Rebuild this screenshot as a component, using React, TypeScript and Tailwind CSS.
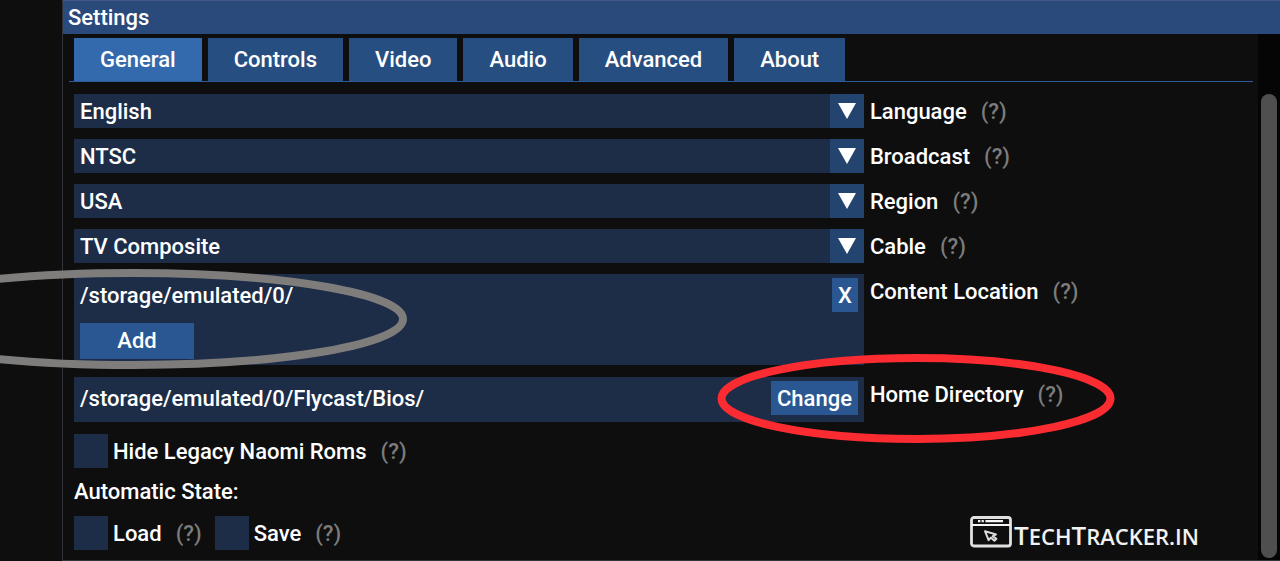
import { useState } from "react";
import type { ReactNode } from "react";

const tabs = ["General", "Controls", "Video", "Audio", "Advanced", "About"];

const combos = [
  { id: "language", label: "Language", options: ["English", "Deutsch", "Français"] },
  { id: "broadcast", label: "Broadcast", options: ["NTSC", "PAL", "PAL/M", "PAL/N"] },
  { id: "region", label: "Region", options: ["USA", "Japan", "Europe"] },
  { id: "cable", label: "Cable", options: ["TV Composite", "TV RGB", "VGA"] },
];

function Help() {
  return <span className="text-[#7c7c7c]">(?)</span>;
}

function Row({ children, label }: { children: ReactNode; label: ReactNode }) {
  return (
    <div className="grid grid-cols-[67%_1fr] gap-[6px]">
      {children}
      <div className="flex h-9 items-center gap-[14px]">
        {label}
        <Help />
      </div>
    </div>
  );
}

function Combo({ id, label, options }: { id: string; label: string; options: string[] }) {
  return (
    <Row label={<label htmlFor={id}>{label}</label>}>
      <div className="relative flex h-[34px]">
        <select id={id} className="w-full appearance-none bg-[#1d2d48] pt-0.5 pr-10 pl-[6px] text-white outline-none">
          {options.map((option) => (
            <option key={option}>{option}</option>
          ))}
        </select>
        <span className="pointer-events-none absolute inset-y-0 right-0 flex w-[34px] items-center justify-center bg-[#23446e]">
          <svg width="18" height="16" viewBox="0 0 18 16" aria-hidden="true">
            <path d="M0 0H18L9 16Z" fill="#fff" />
          </svg>
        </span>
      </div>
    </Row>
  );
}

function Check({ label }: { label: string }) {
  const [on, setOn] = useState(false);
  return (
    <div className="flex h-[34px] items-center gap-[14px]">
      <label className="flex items-center gap-[5px]">
        <input
          type="checkbox"
          checked={on}
          onChange={() => setOn(!on)}
          className="size-[34px] appearance-none bg-[#1d2d48] checked:border-8 checked:border-[#1d2d48] checked:bg-[#4296fa]"
        />
        <span className="pt-0.5">{label}</span>
      </label>
      <span className="pt-0.5">
        <Help />
      </span>
    </div>
  );
}

function Watermark() {
  return (
    <div className="pointer-events-none absolute right-[56px] bottom-[13px] flex w-[254px] items-end gap-[2px]">
      <svg width="42" height="32" viewBox="0 0 42 32" fill="none" aria-hidden="true">
        <rect x="1.5" y="1.5" width="39" height="28.5" rx="2.5" stroke="#e0e0e0" strokeWidth="2.8" />
        <path d="M1.5 9H40.5" stroke="#f4f4f4" strokeWidth="2" />
        <path d="M8 5.2H10.4M11.6 5.2H13.8M15.4 5.2H33" stroke="#f4f4f4" strokeWidth="2.2" />
        <path
          d="M15 15.2L26 18.4L22.8 20.2L26.4 22.8L24.4 24.8L20.9 21.6L18.6 24.2Z"
          stroke="#dcdcdc"
          strokeWidth="2"
          strokeLinejoin="round"
        />
      </svg>
      <span className="font-['Open_Sans',sans-serif] text-[22px] leading-[24px] font-semibold text-[#f2f2f2]">
        <span className="text-[26px]">T</span>ECH<span className="text-[26px]">T</span>RACKER.IN
      </span>
    </div>
  );
}

export default function App() {
  const [active, setActive] = useState("General");

  return (
    <div className="relative min-h-screen overflow-hidden bg-[#0e0e0e] pl-[62px] font-[Roboto,sans-serif] text-[22px] leading-[26px] font-medium text-white">
      <main className="flex min-h-screen flex-col border-b border-l border-[#33333b]">
        <h1 className="h-[34px] border-t border-[#43598a] bg-[#294a7a] px-[5px] py-1">Settings</h1>
        <div className="flex flex-1">
          <div className="min-w-0 flex-1 pt-1 pr-[5px] pl-[6px]">
            <nav className="flex gap-[6px] border-b border-b-[#2c5c9c] pl-[5px]">
              {tabs.map((tab) => (
                <button
                  key={tab}
                  type="button"
                  onClick={() => setActive(tab)}
                  className={
                    tab === active
                      ? "h-[43px] bg-[#3369ad] px-[26px]"
                      : "h-[43px] bg-[#274e80] px-[26px]"
                  }
                >
                  {tab}
                </button>
              ))}
            </nav>

            <div className="flex flex-col gap-3 pt-3 pl-[5px]">
              <div className="flex flex-col gap-[9px]">
                {combos.map((combo) => (
                  <Combo key={combo.id} {...combo} />
                ))}

                <Row label="Content Location">
                  <div className="flex items-start justify-between bg-[#1d2d48] px-[6px] pt-1 pb-[6px]">
                    <div className="flex flex-col gap-[9px]">
                      <span className="leading-9">/storage/emulated/0/</span>
                      <button type="button" className="h-9 w-[114px] bg-[#2a5791]">Add</button>
                    </div>
                    <button type="button" className="h-[34px] bg-[#2a5791] px-[6px] pt-0.5">X</button>
                  </div>
                </Row>
              </div>

              <Row label="Home Directory">
                <div className="flex h-[45px] items-start justify-between bg-[#1d2d48] px-[6px] pt-1">
                  <span className="leading-9">/storage/emulated/0/Flycast/Bios/</span>
                  <button type="button" className="h-[34px] bg-[#2a5791] px-[6px] pt-0.5">Change</button>
                </div>
              </Row>

              <Check label="Hide Legacy Naomi Roms" />
              <p className="leading-6">Automatic State:</p>
              <div className="flex gap-[13px]">
                <Check label="Load" />
                <Check label="Save" />
              </div>
            </div>
          </div>
          <div className="flex w-[22px] flex-col bg-[#050506] px-[3px] pt-[60px] pb-[2px]">
            <div className="flex-1 rounded-full bg-[#4f4f4f]" />
          </div>
        </div>
      </main>

      <svg className="pointer-events-none absolute top-[269px] left-[-141px]" width="548" height="100" viewBox="0 0 548 100" aria-hidden="true">
        <ellipse cx="274" cy="50" rx="270" ry="46" fill="none" stroke="#7f7d7c" strokeWidth="8" />
      </svg>
      <svg className="pointer-events-none absolute top-[354px] left-[717px]" width="398" height="89" viewBox="0 0 398 89" aria-hidden="true">
        <ellipse cx="199" cy="44.5" rx="194.5" ry="40.5" fill="none" stroke="#fb2b32" strokeWidth="8" />
      </svg>
      <Watermark />
    </div>
  );
}
